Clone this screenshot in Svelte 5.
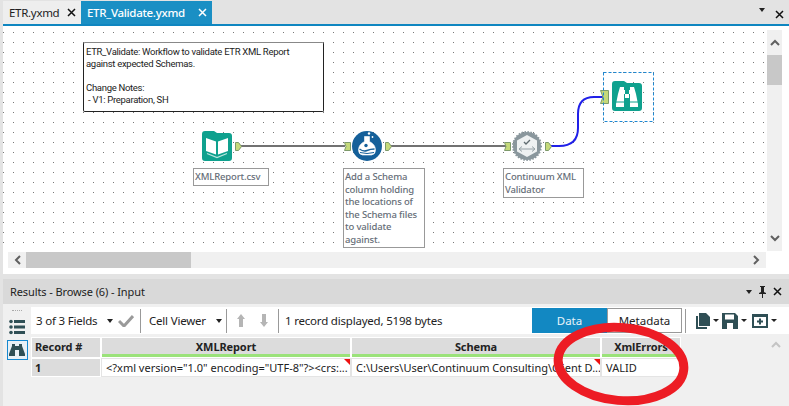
<script>
  const fields = [
    { name: 'XMLReport', value: '<?xml version="1.0" encoding="UTF-8"?><crs:...', flag: true },
    { name: 'Schema', value: 'C:\\Users\\User\\Continuum Consulting\\Client D...', flag: true },
    { name: 'XmlErrors', value: 'VALID', flag: false }
  ];
</script>

<div class="app">
  <header class="tabbar">
    <div class="tab">
      <span>ETR.yxmd</span>
      <svg class="x" viewBox="0 0 9 9"><path d="M1 1l7 7M8 1L1 8" /></svg>
    </div>
    <div class="tab active">
      <span>ETR_Validate.yxmd</span>
      <svg class="x" viewBox="0 0 9 9"><path d="M1 1l7 7M8 1L1 8" /></svg>
    </div>
    <div class="tabbar-end">
      <i class="tri top"></i>
      <svg class="x" viewBox="0 0 9 9"><path d="M1 1l7 7M8 1L1 8" /></svg>
    </div>
  </header>

  <section class="workspace">
    <div class="canvas-row">
      <div class="canvas">
        <div class="note">ETR_Validate: Workflow to validate ETR XML Report<br />against expected Schemas.<br /><br />Change Notes:<br />&nbsp;- V1: Preparation, SH</div>

        <svg class="wires" width="764" height="226" viewBox="3 26 764 226">
          <path d="M241 146H345M391 146H506" fill="none" stroke="#444" stroke-width="1.5" />
          <path d="M551 146H559Q578 146 578 128V114Q578 97 594 97H605" fill="none" stroke="#2020e8" stroke-width="2" />
          <path class="anchor" d="M235.500 142.500h3l3 4-3 4h-3z" />
          <path class="anchor" d="M344.500 142.500h6v8h-6l1.500-4z" />
          <path class="anchor" d="M385.500 142.500h3l3 4-3 4h-3z" />
          <path class="anchor" d="M504.500 142.500h6v8h-6l1.500-4z" />
          <path class="anchor" d="M545.500 142.500h3l3 4-3 4h-3z" />
          <path class="anchor" d="M600.500 90.500h8v13h-8l2.500-6.500z" />
          <rect x="603.500" y="72.500" width="50" height="49" fill="none" stroke="#1e88d2" stroke-dasharray="3 2" />

          <path d="M202 134a3 3 0 0 1 3-3h9l3 2h12a3 3 0 0 1 3 3v22a3 3 0 0 1-3 3h-24a3 3 0 0 1-3-3z" fill="#0fa18e" />
          <path d="M206 138l10 3.500v13l-10-3.500zM228 138l-10 3.500v13l10-3.500z" fill="#fff" />
          <path d="M207 153.500l10 4 10-4" fill="none" stroke="#b9e6df" stroke-width="1.200" />

          <circle cx="367" cy="146" r="15" fill="#15609a" />
          <path d="M364.500 136.500h5v5q6 3 6 8.500 0 4.500-4 5h-9q-4-.5-4-5 0-5.500 6-8.500z" fill="#fff" stroke="#fff" stroke-width=".6" />
          <path d="M359.500 149q4 3 7.500 1.500t7.500-1.500" fill="none" stroke="#15609a" stroke-width="1.400" />
          <path d="M360 152.500q7 2 14 0" fill="none" stroke="#15609a" stroke-width="1" />
          <circle cx="366" cy="145.500" r="1.700" fill="#15609a" />
          <circle cx="369" cy="133.500" r="1.200" fill="#fff" />
          <circle cx="372.500" cy="137" r=".9" fill="#fff" />

          <circle cx="527" cy="146" r="14" fill="#8a979d" stroke="#8a979d" stroke-dasharray="1.500 1.500" stroke-width="2" />
          <path d="M527 135l10 5.500v11l-10 5.500-10-5.500v-11z" fill="#eef1f2" />
          <path d="M524 142l2 2 4-4" fill="none" stroke="#5f6b70" stroke-width="1.300" />
          <path d="M522 146.500l-3 2.500 3 2.500M532 146.500l3 2.500-3 2.500M520 149h14" fill="none" stroke="#8a979d" stroke-width=".9" />

          <path d="M612 84a3 3 0 0 1 3-3h9l3 2h12a3 3 0 0 1 3 3v22a3 3 0 0 1-3 3h-24a3 3 0 0 1-3-3z" fill="#0fa18e" />
          <path d="M620 87h4v3h1v4h-1v13h-8v-3l2-10zM634 87h-4v3h-1v4h1v13h8v-3l-2-10z" fill="#fff" />
          <path d="M625 94h4v4h-4z" fill="#fff" />
          <path d="M616 102h8M630 102h8" stroke="#0fa18e" />
        </svg>

        <div class="label one">XMLReport.csv</div>
        <div class="label two">Add a Schema<br />column holding<br />the locations of<br />the Schema files<br />to validate<br />against.</div>
        <div class="label three">Continuum XML<br />Validator</div>
      </div>

      <div class="vbar">
        <svg class="chev" viewBox="0 0 10 7"><path d="M1 6l4-4 4 4" /></svg>
        <div class="vthumb"></div>
        <div class="spacer"></div>
        <svg class="chev" viewBox="0 0 10 7"><path d="M1 1l4 4 4-4" /></svg>
      </div>
    </div>

    <div class="hbar">
      <svg class="chev side" viewBox="0 0 7 10"><path d="M6 1L2 5l4 4" /></svg>
      <div class="hthumb"></div>
      <div class="spacer"></div>
      <svg class="chev side" viewBox="0 0 7 10"><path d="M1 1l4 4-4 4" /></svg>
    </div>
  </section>

  <section class="results">
    <div class="results-title">
      <span>Results - Browse (6) - Input</span>
      <div class="title-tools">
        <i class="tri"></i>
        <svg class="pin" viewBox="0 0 9 12"><path d="M2 0h5v1H6v5l2 1v1H5v4H4V8H1V7l2-1V1H2z" /></svg>
        <svg class="x" viewBox="0 0 9 9"><path d="M1 1l7 7M8 1L1 8" /></svg>
      </div>
    </div>

    <div class="results-body">
      <aside class="side-tools">
        <div class="grip"></div>
        <svg class="list" viewBox="0 0 16 16">
          <circle cx="2" cy="2.500" r="1.800" /><circle cx="2" cy="8" r="1.800" /><circle cx="2" cy="13.500" r="1.800" />
          <rect x="5" y="1" width="11" height="3" /><rect x="5" y="6.500" width="11" height="3" /><rect x="5" y="12" width="11" height="3" />
        </svg>
        <div class="browse-tool">
          <svg viewBox="0 0 16 14"><path d="M3 1h3v2h4V1h3v2l3 8v2H10V7H6v6H0v-2l3-8z" /></svg>
        </div>
      </aside>

      <div class="main">
        <div class="toolbar">
          <span class="t fields">3 of 3 Fields</span>
          <i class="tri"></i>
          <svg class="check" viewBox="0 0 16 13"><path d="M1 7l5 5L15 2" /></svg>
          <b class="sep"></b>
          <span class="t viewer">Cell Viewer</span>
          <i class="tri"></i>
          <b class="sep s2"></b>
          <svg class="arrow up" viewBox="0 0 8 13"><path d="M4 0l4 5H6v8H2V5H0z" /></svg>
          <svg class="arrow down" viewBox="0 0 8 13"><path d="M4 13L0 8h2V0h4v8h2z" /></svg>
          <b class="sep s3"></b>
          <span class="t info">1 record displayed, 5198 bytes</span>
          <div class="seg">
            <span class="on">Data</span>
            <span class="off">Metadata</span>
          </div>
          <b class="sep last"></b>
          <svg class="tool file" width="15" height="16" viewBox="0 0 15 16"><path d="M4 0h7l4 4v9H4zM1 3h2v11h9v2H1z" /></svg>
          <i class="mini"></i>
          <svg class="tool" width="16" height="16" viewBox="0 0 16 16"><path fill-rule="evenodd" d="M0 0h13l3 3v13H0zM3 1.500v5h9v-5zM5 10v6h6v-6z" /></svg>
          <i class="mini"></i>
          <svg class="tool box" width="16" height="14" viewBox="0 0 16 14"><path fill-rule="evenodd" d="M0 0h16v14H0zM2 3v9h12V3zM7 4.500h2v2h2v2H9v2H7v-2H5v-2h2z" /></svg>
          <i class="mini"></i>
        </div>

        <div class="table-wrap">
          <div class="table">
            <div class="rec head">Record #</div>
            {#each fields as f}
              <div class="head field">{f.name}</div>
            {/each}
            <div class="rec num">1</div>
            {#each fields as f}
              <div class="cell">{f.value}{#if f.flag}<i class="flag"></i>{/if}</div>
            {/each}
          </div>
          <svg class="chev grid-up" viewBox="0 0 10 7"><path d="M1 6l4-4 4 4" /></svg>
        </div>
      </div>
    </div>
  </section>

  <svg class="circle" width="789" height="406" viewBox="0 0 789 406">
    <ellipse cx="621" cy="364" rx="63" ry="36.500" transform="rotate(5 621 364)" fill="none" stroke="#ed1c24" stroke-width="9" />
  </svg>
</div>

<style>
  :global(body) { margin: 0; }
  .app {
    position: relative;
    width: 789px;
    height: 406px;
    overflow: hidden;
    display: flex;
    flex-direction: column;
    background: #e3e3e3;
    font-family: "Noto Sans", sans-serif;
    font-size: 12px;
    color: #222;
  }
  .x { width: 9px; height: 9px; fill: none; stroke: #111; stroke-width: 1.500; flex: none; }
  .tri { width: 0; height: 0; border: 3.500px solid transparent; border-top: 4px solid #222; border-bottom: 0; flex: none; }

  .tabbar {
    height: 23px;
    padding: 1px 0 0 3px;
    display: flex;
    background: #e3e3e3;
    flex: none;
  }
  .tab {
    display: flex;
    align-items: center;
    justify-content: space-between;
    width: 78px;
    padding: 0 5px 0 6px;
    box-sizing: border-box;
    background: #eeeeee;
    font-size: 11.500px;
    letter-spacing: -0.3px;
  }
  .tab.active {
    width: 131px;
    background: #1a8fc4;
    color: #fff;
    font-weight: 500;
  }
  .tab.active .x { stroke: #fff; }
  .tabbar-end {
    margin-left: auto;
    width: 30px;
    padding-right: 5px;
    box-sizing: border-box;
    display: flex;
    justify-content: space-between;
  }
  .tabbar-end .tri { margin-top: 7px; }
  .tabbar-end .x { margin-top: 9px; }

  .workspace {
    flex: none;
    height: 242px;
    margin-left: 3px;
    background: #fff;
    border-top: 2px solid #0f86c0;
    display: flex;
    flex-direction: column;
    padding-bottom: 6px;
  }
  .canvas-row { flex: 1; display: flex; min-height: 0; }
  .canvas {
    position: relative;
    width: 764px;
    flex: none;
    background-image: radial-gradient(circle at 0.5px 0.5px, #777 0.5px, transparent 0.8px);
    background-size: 10px 10px;
    background-position: 10px 6px;
  }
  .wires { position: absolute; left: 0; top: 0; overflow: visible; }
  .wires .anchor { fill: #c5d97a; stroke: #7d9a6a; }

  .note {
    position: absolute;
    left: 80px;
    top: 16px;
    width: 241px;
    height: 70px;
    box-sizing: border-box;
    padding: 3px 2px;
    background: #fff;
    border: 1px solid #222;
    border-top-color: #888;
    border-radius: 2px;
    font-family: Roboto, sans-serif;
    font-size: 9.500px;
    letter-spacing: -0.3px;
    line-height: 12px;
    color: #222;
    white-space: nowrap;
  }
  .label {
    position: absolute;
    background: #fff;
    border: 1px solid #999;
    box-sizing: border-box;
    font-size: 9.500px;
    line-height: 12.500px;
    padding: 2px 1px;
    color: #666e78;
    font-weight: 500;
    letter-spacing: -0.15px;
    white-space: nowrap;
  }
  .label.one { left: 190px; top: 142px; width: 76px; height: 18px; }
  .label.two { left: 340px; top: 142px; width: 82px; height: 80px; }
  .label.three { left: 500px; top: 142px; width: 81px; height: 30px; }

  .vbar {
    width: 15px;
    flex: none;
    margin: 4px 0 0 0;
    background: #f0f0f0;
    display: flex;
    flex-direction: column;
    align-items: center;
  }
  .vthumb { width: 100%; height: 30px; background: #c8c8c8; flex: none; }
  .spacer { flex: 1; }
  .chev { fill: none; stroke: #606060; stroke-width: 2; width: 10px; height: 7px; margin: 9px 0; flex: none; }
  .chev.side { width: 7px; height: 10px; margin: 0 6px; }
  .hbar {
    flex: none;
    height: 16px;
    width: 758px;
    margin: 1px 0 0 5px;
    background: #f0f0f0;
    display: flex;
    align-items: center;
  }
  .hthumb { width: 165px; height: 100%; background: #c8c8c8; flex: none; margin-left: -1px; }

  .results { flex: 1; margin: 5px 0 0 3px; background: #f0f0f0; display: flex; flex-direction: column; min-height: 0; }
  .results-title {
    flex: none;
    height: 25px;
    background: #d9d9d9;
    display: flex;
    align-items: center;
    justify-content: space-between;
    padding: 0 7px;
    font-size: 11px;
    letter-spacing: -0.1px;
    color: #222;
  }
  .title-tools { display: flex; align-items: center; gap: 6px; }
  .pin { width: 9px; height: 12px; fill: #222; }

  .results-body { flex: 1; display: flex; min-height: 0; }
  .side-tools { width: 28px; flex: none; display: flex; flex-direction: column; align-items: center; padding-top: 6px; box-sizing: border-box; }
  .grip { width: 10px; height: 1px; border-top: 1px dotted #aaa; }
  .list { width: 16px; height: 16px; fill: #2f4f55; margin-top: 7px; }
  .browse-tool {
    width: 21px;
    height: 20px;
    box-sizing: border-box;
    border: 1px solid #1488d0;
    background: #e8f0f6;
    margin-top: 5px;
    display: flex;
    align-items: center;
    justify-content: center;
  }
  .browse-tool svg { width: 16px; height: 14px; fill: #2f4f55; }

  .main { flex: 1; min-width: 0; display: flex; flex-direction: column; }
  .toolbar {
    flex: none;
    height: 27px;
    margin-top: 3px;
    background: #fff;
    display: flex;
    align-items: center;
    padding-left: 5px;
  }
  .toolbar > * { flex: none; }
  .t { font-size: 11.500px; letter-spacing: -0.2px; white-space: nowrap; }
  .fields { width: 62px; }
  .toolbar .tri { margin-left: 9px; }
  .check { width: 16px; height: 13px; margin-left: 5px; fill: none; stroke: #9a9a9a; stroke-width: 3; }
  .sep { width: 1px; height: 24px; background: #999; margin-left: 6px; }
  .viewer { margin-left: 8px; width: 58px; }
  .sep.s2 { margin-left: 4px; }
  .arrow { width: 8px; height: 13px; fill: #b5b5b5; }
  .arrow.up { margin-left: 10px; }
  .arrow.down { margin-left: 15px; }
  .sep.s3 { margin-left: 10px; }
  .info { margin-left: 6px; width: 157px; }
  .seg { display: flex; margin-left: 90px; height: 25px; font-size: 11.500px; }
  .seg span { width: 75px; display: flex; align-items: center; justify-content: center; box-sizing: border-box; }
  .seg .on { background: #1288c2; color: #e8f4fa; }
  .seg .off { border: 1px solid #999; background: #fff; }
  .sep.last { margin-left: 3px; }
  .tool { fill: #2f4f55; margin-left: 3px; }
  .tool.file { margin-left: 9px; }
  .tool.box { margin-left: 5px; }
  .mini { width: 0; height: 0; border: 3px solid transparent; border-top: 3px solid #222; border-bottom: 0; margin-left: 3px; }

  .table-wrap { position: relative; flex: 1; padding-top: 3px; }
  .table {
    display: grid;
    grid-template-columns: 68px 248px 248px 78px;
    grid-template-rows: 19px 17px;
    column-gap: 2px;
    row-gap: 2px;
    width: 648px;
    background: #fff;
    padding: 1px;
  }
  .head {
    background: #dcdcdc;
    font-weight: 700;
    font-size: 11px;
    letter-spacing: -0.1px;
    line-height: 17px;
    text-align: center;
    box-sizing: border-box;
  }
  .field { border-bottom: 3px solid #9be27a; }
  .rec { background: #dcdcdc; text-align: left; padding-left: 3px; font-weight: 700; font-size: 11px; line-height: 17px; }
  .cell {
    position: relative;
    background: #fff;
    font-size: 11px;
    line-height: 17px;
    padding-left: 4px;
    white-space: nowrap;
    overflow: hidden;
    outline: 1px solid #e4e4e4;
  }
  .flag {
    position: absolute;
    right: 0;
    top: 0;
    width: 0;
    height: 0;
    border-top: 6px solid #ee1111;
    border-left: 6px solid transparent;
  }
  .grid-up { position: absolute; right: 8px; top: 7px; stroke: #c4c4c4; margin: 0; }
  .circle { position: absolute; left: 0; top: 0; pointer-events: none; }
</style>
